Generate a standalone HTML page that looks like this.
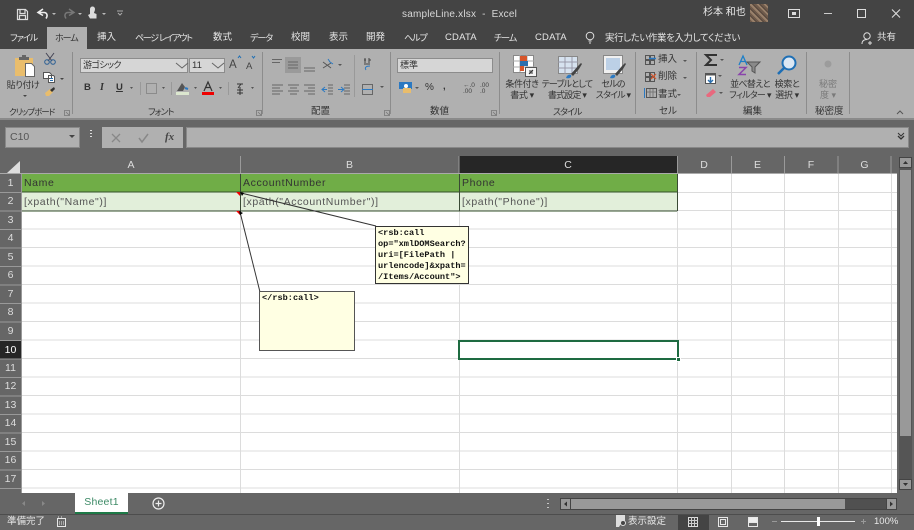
<!DOCTYPE html>
<html><head><meta charset="utf-8"><style>
html,body{margin:0;padding:0;background:#666}
#p{position:relative;width:914px;height:530px;overflow:hidden;background:#666;font-family:"Liberation Sans","Noto Sans CJK JP",sans-serif;font-size:10px;color:#333;font-feature-settings:"palt"}
#p div{position:absolute;white-space:nowrap}
.w{color:#e8e8e8}
.k{color:#333;font-size:9.5px;line-height:12px}
.c{text-align:center}
.sep{width:1px;background:#8c8c8c;top:52px;height:62px}
.tab{top:30px;font-size:9.5px;line-height:16px;color:#e6e6e6}
.kn{font-size:9px;letter-spacing:-1px}
.n{letter-spacing:-.4px}
.h{color:#ddd;font-size:10.5px;text-align:center;line-height:18px}
.r{left:0;width:21px;color:#ddd;font-size:10.5px;text-align:center;height:18px;line-height:18px;background:#666}
.cell{font-size:10.5px;line-height:18px;color:#555;letter-spacing:.6px}
svg{position:absolute;overflow:visible}
.note{font-family:"Liberation Mono","Noto Sans CJK JP",monospace;font-weight:bold;font-size:8.6px;line-height:11.1px;color:#111;background:#ffffe3}
</style></head><body><div id="p">
<!-- title -->
<div style="left:0;top:0;width:914px;height:27px;background:#444"></div>
<div style="left:0;top:27px;width:914px;height:22px;background:#444"></div>
<div style="left:47px;top:27px;width:40px;height:22px;background:#b0b0b0"></div>
<svg style="left:0;top:0" width="914" height="49" fill="none" stroke="#ddd">
<path d="M17.500 9.500h8l2 2v8h-10zM20 9.500v4h5v-4M19.500 19.500v-4h6v4" stroke-width="1.200"/>
<path d="M43 9l-5 3.500 5 3M38 12.500h6c3 0 4 3 2 6" stroke="#eee" stroke-width="1.600"/>
<path d="M69 9l5 3.500-5 3M74 12.500h-6c-3 0-4 3-2 6" stroke="#777" stroke-width="1.500"/>
<path d="M90 9a2.500 2.500 0 0 1 5 0c0 2-1 3-1 4l2.500 1v4.500h-6.500l-2-3.500 2-1z" fill="#ddd" stroke="none"/>
<path d="M52 13h4l-2 2zM78 13h4l-2 2zM102 13h4l-2 2z" fill="#bbb" stroke="none"/>
<path d="M117 11h6M118 13l2 2 2-2" stroke="#aaa"/>
<rect x="788.500" y="9.500" width="11" height="8" stroke="#ddd"/><rect x="792" y="12" width="4" height="3" fill="#ddd" stroke="none"/>
<path d="M824 13.500h8" stroke="#ccc"/><rect x="857.500" y="9.500" width="8" height="8" stroke="#ddd"/>
<path d="M892 9.500l8 8M900 9.500l-8 8" stroke="#ddd" stroke-width="1.100"/>
<circle cx="590" cy="36" r="3.800" stroke="#ddd"/><path d="M588.500 41h3M589 43h2" stroke="#ddd"/>
<circle cx="867" cy="36" r="3.200" stroke="#ddd"/><path d="M862 44c0-3 2-4.500 5-4.500M870 41v4M868 43h4" stroke="#ddd"/>
</svg>
<div class="w" style="left:402px;top:8px;font-size:10px;line-height:13px;letter-spacing:.2px;color:#d8d8d8">sampleLine.xlsx&nbsp; -&nbsp; Excel</div>
<div class="w" style="left:703px;top:6px;font-size:10px;line-height:14px">杉本 和也</div>
<div style="left:750px;top:4px;width:18px;height:18px;background:repeating-linear-gradient(45deg,#6e5a4b 0 2px,#98806a 2px 4px,#54453b 4px 5px)"></div>
<div class="tab kn" style="left:10px">ファイル</div>
<div class="tab kn" style="left:55px;color:#333">ホーム</div>
<div class="tab" style="left:97px">挿入</div>
<div class="tab kn" style="left:135px;letter-spacing:-1.300px">ページ レイアウト</div>
<div class="tab" style="left:213px">数式</div>
<div class="tab kn" style="left:250px">データ</div>
<div class="tab" style="left:291px">校閲</div>
<div class="tab" style="left:329px">表示</div>
<div class="tab" style="left:366px">開発</div>
<div class="tab kn" style="left:404px">ヘルプ</div>
<div class="tab" style="left:445px;letter-spacing:.2px">CDATA</div>
<div class="tab kn" style="left:494px">チーム</div>
<div class="tab" style="left:535px;letter-spacing:.2px">CDATA</div>
<div class="tab" style="left:605px;font-size:9.4px;letter-spacing:-.3px">実行したい作業を入力してください</div>
<div class="tab" style="left:877px">共有</div>
<!-- ribbon -->
<div style="left:0;top:49px;width:914px;height:69px;background:#b0b0b0"></div>
<div style="left:0;top:118px;width:914px;height:2px;background:#8a8a8a"></div>
<div class="sep" style="left:72px"></div><div class="sep" style="left:262px"></div><div class="sep" style="left:390px"></div><div class="sep" style="left:499px"></div><div class="sep" style="left:635px"></div><div class="sep" style="left:696px"></div><div class="sep" style="left:806px"></div><div class="sep" style="left:849px"></div>
<div style="left:354px;top:55px;width:1px;height:42px;background:#999"></div>
<div style="left:140px;top:82px;width:1px;height:13px;background:#999"></div>
<div style="left:171px;top:82px;width:1px;height:13px;background:#999"></div>
<div style="left:228px;top:82px;width:1px;height:13px;background:#999"></div>
<svg style="left:0;top:49px" width="914" height="69" fill="none">
<!-- clipboard -->
<path d="M15 9h18v18H15z" fill="#e9bd6c"/><path d="M19 8h10v3H19z" fill="#666"/><path d="M22 6h4v3h-4z" fill="#666"/>
<path d="M25.500 14.500h6l3 3v10h-9z" fill="#fff" stroke="#666"/>
<path d="M46 4l6 8M54 4l-6 8" stroke="#445"/><circle cx="47" cy="13" r="2.300" stroke="#2b5f94"/><circle cx="53" cy="13" r="2.300" stroke="#2b5f94"/>
<path d="M43.500 23.500h6l2 2v4h-8zM48.500 26.500h5l1 1v6h-6z" fill="#fff" stroke="#555"/><path d="M50 29.500h3M50 31.500h3" stroke="#2b6fae"/>
<path d="M45 44l5-4 3 3-4 4-3 0z" fill="#e9bd6c"/><path d="M50 41l4-3 1 2-3 3z" fill="#333"/>
<path d="M60 29h4l-2 2zM23 46h4l-2 2z" fill="#444"/>
<!-- align group -->
<rect x="285" y="8" width="16" height="16" fill="#9a9a9a"/>
<path d="M272 10.500h10M272 13.500h8M288 13h10M288 16h10M288 19h10M304 19h11M304 22h11" stroke="#666"/>
<path d="M272 36h11M272 39h8M272 42h11M272 45h8M288 36h11M290 39h7M288 42h11M290 45h7M304 36h11M308 39h7M304 42h11M308 45h7" stroke="#666"/>
<path d="M328 36h5M328 39h5M328 42h5M328 45h5" stroke="#666"/><path d="M322 40.500h5M325 38l-3 2.500 3 2.500" stroke="#2b79c2"/>
<path d="M344 36h6M344 39h6M344 42h6M344 45h6" stroke="#666"/><path d="M338 40.500h5M341 38l3 2.500-3 2.500" stroke="#2b79c2"/>
<path d="M323 13l8 6M323 19l8-5" stroke="#555"/><path d="M328 10l2 3 3 2" stroke="#2b79c2"/>
<path d="M338 15h4l-2 2zM380 37h4l-2 2z" fill="#555"/>
<path d="M364 11h2M369 11h2M364 15h6" stroke="#444"/><path d="M365 9v5M369 9v5" stroke="#444"/><path d="M370 17c-3 0-6 1-4 4" stroke="#2b79c2"/>
<rect x="362.500" y="35.500" width="10" height="10" stroke="#666"/><path d="M362 40.500h11" stroke="#2b79c2"/>
<!-- font group -->
<path d="M130 38h3l-1.500 2zM162 38h3l-1.500 2zM194 38h3l-1.500 2zM219 38h3l-1.500 2zM251 38h3l-1.500 2z" fill="#555"/>
<rect x="146.500" y="34.500" width="10" height="10" stroke="#666" stroke-dasharray="1 1"/>
<path d="M177 42l5-8 3 4-2 4z" fill="#555"/><path d="M185 39l3 1" stroke="#2b79c2" stroke-width="2"/><rect x="176" y="43" width="13" height="3" fill="#dce7cf"/>
<rect x="202" y="43" width="12" height="3" fill="#e00"/>
<path d="M204 42l4-9 4 9M205.500 38.500h5" stroke="#333" stroke-width="1.200"/>
<path d="M237 35h6M241 35l-3 4M237 41h6M237 44h6M240 38v8" stroke="#333"/>
<path d="M238 9l1.500-2 1.500 2" stroke="#1e6fb5"/><path d="M252 7l1.500 2 1.500-2" stroke="#1e6fb5"/>
<!-- expanders -->
<path d="M64.500 61.500h5v5h-5zM66 63l3 3M256.500 61.500h5v5h-5zM258 63l3 3M384.500 61.500h5v5h-5zM386 63l3 3M491.500 61.500h5v5h-5zM493 63l3 3" stroke="#777" stroke-width=".8"/>
<!-- number -->
<rect x="399" y="33" width="13" height="7" fill="#2b79c2"/><path d="M403 39h8v5h-8z" fill="#e9bd6c"/><circle cx="406" cy="37" r="2" fill="#fff"/>
<path d="M415 38h4l-2 2z" fill="#555"/>
<!-- styles -->
<rect x="513.500" y="6.500" width="20" height="17" fill="#fff" stroke="#888"/><path d="M520 6v17M527 6v17M513 12h21M513 18h21" stroke="#aaa"/><rect x="520" y="7" width="7" height="5" fill="#d7552a"/><rect x="520" y="12" width="8" height="5" fill="#2b6fae"/><rect x="520" y="17" width="4" height="5" fill="#d7552a"/><rect x="525.500" y="18.500" width="11" height="9" fill="#f4f4f4" stroke="#555"/><path d="M529 25l4-4M529 22h4M529 24h4" stroke="#333"/>
<rect x="558.500" y="7.500" width="19" height="17" fill="#d6e2ef" stroke="#888"/><path d="M558 13h20M565 8v17M572 8v17M558 19h20" stroke="#99a"/><path d="M571 25l7-8 3-3 1 1-3 5-6 7z" fill="#444"/><path d="M566 29c1-3 3-4 5-3 1 2-1 4-5 3z" fill="#2b79c2"/>
<rect x="603.500" y="6.500" width="19" height="18" fill="#f0f0f0" stroke="#888"/><rect x="606" y="9" width="14" height="12" fill="#bcd0e6"/><path d="M615 25l7-8 3-3 1 1-3 5-6 7z" fill="#444"/><path d="M610 29c1-3 3-4 5-3 1 2-1 4-5 3z" fill="#2b79c2"/>
<!-- cells -->
<g stroke="#555"><rect x="645.500" y="6.500" width="4" height="4"/><rect x="650.500" y="6.500" width="4" height="4"/><rect x="645.500" y="11.500" width="4" height="4"/><rect x="650.500" y="11.500" width="4" height="4"/>
<rect x="645.500" y="23.500" width="4" height="4"/><rect x="650.500" y="23.500" width="4" height="4"/><rect x="645.500" y="28.500" width="4" height="4"/><rect x="650.500" y="28.500" width="4" height="4"/>
<rect x="646.500" y="39.500" width="10" height="9"/><path d="M647 43h9M650 40v8M653 40v8" stroke="#777"/></g>
<path d="M649 9.500h7" stroke="#2b79c2" stroke-width="1.500"/><path d="M651 25l5 5M656 25l-5 5" stroke="#d7552a" stroke-width="1.200"/><path d="M644.500 39v10" stroke="#2b79c2"/>
<path d="M683 11h4l-2 2zM683 28h4l-2 2zM677 45h4l-2 2zM720 10h4l-2 2zM718 26h4l-2 2zM719 43h4l-2 2z" fill="#555"/>
<!-- edit -->
<path d="M717 6h-11l5 5-5 5h11" stroke="#333" stroke-width="2"/>
<rect x="705.500" y="24.500" width="10" height="10" fill="#fff" stroke="#555"/><path d="M705 25.500h11" stroke="#555" stroke-width="2"/><path d="M710.500 28v5M708 31l2.500 2.500 2.500-2.500" stroke="#2b6fae" stroke-width="1.400"/>
<path d="M706 46l7-6 3 3-6 5-3 0z" fill="#e8697e"/>
<path d="M739 16l4-9 4 9M741 12.500h4" stroke="#1e7fc7" stroke-width="1.300"/><path d="M739 18.500h7l-7 7h7" stroke="#8a44ab" stroke-width="1.500"/>
<path d="M747 13h13l-5 5v6l-3-2v-4z" fill="#8a8a8a" stroke="#555"/>
<circle cx="789" cy="14" r="6.500" fill="#dbe7f3" stroke="#1e6fb5" stroke-width="2"/><path d="M784 19l-6 6" stroke="#1e6fb5" stroke-width="2.600"/>
<circle cx="828" cy="15" r="3.500" fill="#9c9c9c"/>
<path d="M897 65l3-3 3 3" stroke="#555"/>
</svg>
<div class="k c n" style="left:5px;top:79px;width:36px;font-size:9px">貼り付け</div>
<div class="k" style="left:9px;top:106px;font-size:8.5px;letter-spacing:-1px">クリップボード</div>
<div style="left:80px;top:58px;width:108px;height:15px;background:#d6d6d6;border:1px solid #8c8c8c;box-sizing:border-box;font-size:9px;line-height:13px;padding-left:2px;letter-spacing:-.6px">游ゴシック</div>
<div style="left:189px;top:58px;width:36px;height:15px;background:#d6d6d6;border:1px solid #8c8c8c;box-sizing:border-box;font-size:9.5px;line-height:13px;padding-left:2px">11</div>
<svg style="left:0;top:0" width="520" height="80" fill="none"><path d="M176 63l6 5 6-5M212 63l6 5 6-5M481 63l5 4 5-4" stroke="#666"/></svg>
<div style="left:229px;top:58px;font-size:11.5px;line-height:14px;color:#444">A</div>
<div style="left:246px;top:60px;font-size:9.5px;line-height:13px;color:#444">A</div>
<div style="left:84px;top:82px;font-weight:bold;font-size:9.5px;line-height:12px">B</div>
<div style="left:100px;top:82px;font-style:italic;font-family:'Liberation Serif',serif;font-weight:bold;font-size:10px;line-height:12px">I</div>
<div style="left:116px;top:82px;font-weight:bold;font-size:9.5px;line-height:12px;text-decoration:underline">U</div>
<div class="k" style="left:148px;top:106px;font-size:9px;letter-spacing:-1px">フォント</div>
<div class="k" style="left:311px;top:106px">配置</div>
<div style="left:397px;top:58px;width:96px;height:15px;background:#d6d6d6;border:1px solid #8c8c8c;box-sizing:border-box;font-size:9px;line-height:13px;padding-left:2px">標準</div>
<div class="k" style="left:425px;top:82px;font-size:10px">%</div>
<div class="k" style="left:443px;top:81px;font-weight:bold">,</div>
<div style="left:463px;top:83px;font-size:6.5px;line-height:5.500px;color:#444">←.0<br>.00</div>
<div style="left:480px;top:83px;font-size:6.5px;line-height:5.500px;color:#444">.00<br>.0</div>
<div class="k" style="left:430px;top:106px">数値</div>
<div class="k c n" style="left:505px;top:79px;width:34px;line-height:11px;font-size:9px">条件付き<br>書式 ▾</div>
<div class="k c" style="left:541px;top:79px;width:52px;line-height:11px;font-size:9px;letter-spacing:-.8px">テーブルとして<br>書式設定 ▾</div>
<div class="k c" style="left:594px;top:79px;width:38px;line-height:11px;font-size:9px;letter-spacing:-.8px">セルの<br>スタイル ▾</div>
<div class="k" style="left:553px;top:106px;font-size:9px;letter-spacing:-1px">スタイル</div>
<div class="k" style="left:658px;top:54px">挿入</div><div class="k" style="left:658px;top:71px">削除</div><div class="k" style="left:658px;top:89px">書式</div>
<div class="k" style="left:659px;top:106px">セル</div>
<div class="k c" style="left:728px;top:79px;width:44px;line-height:11px;font-size:9px;letter-spacing:-.7px">並べ替えと<br>フィルター ▾</div>
<div class="k c n" style="left:772px;top:79px;width:30px;line-height:11px;font-size:9px">検索と<br>選択 ▾</div>
<div class="k" style="left:743px;top:106px">編集</div>
<div class="k c" style="left:810px;top:79px;width:36px;line-height:11px;font-size:9px;color:#7a7a7a">秘密<br>度 ▾</div>
<div class="k" style="left:815px;top:106px">秘密度</div>
<!-- formula bar -->
<div style="left:5px;top:127px;width:75px;height:21px;background:#b0b0b0;border:1px solid #888;box-sizing:border-box;font-size:10.5px;line-height:19px;padding-left:4px;color:#555">C10</div>
<div style="left:102px;top:127px;width:81px;height:21px;background:#b0b0b0"></div>
<div style="left:186px;top:127px;width:723px;height:21px;background:#b0b0b0;border:1px solid #888;box-sizing:border-box"></div>
<svg style="left:0;top:120px" width="914" height="36" fill="none">
<path d="M69 15h6l-3 3z" fill="#444"/>
<path d="M91 10v1M91 13v1M91 16v1" stroke="#ddd" stroke-width="2"/>
<path d="M112 14l8 8M120 14l-8 8" stroke="#888" stroke-width="1.300"/><path d="M139 18l3 4 6-8" stroke="#888" stroke-width="1.500"/>
<path d="M898 16l3 3 3-3" stroke="#333" stroke-width="1.300"/><path d="M898 13l3 3 3-3" stroke="#333"/>
</svg>
<div style="left:165px;top:130px;font-family:'Liberation Serif',serif;font-style:italic;font-weight:bold;font-size:11px;line-height:14px;color:#444">fx</div>
<!-- headers -->
<div style="left:22px;top:156px;width:875px;height:18px;background:#666"></div>
<div style="left:459px;top:156px;width:218px;height:18px;background:#262626;border-bottom:1px solid #1e6b41;box-sizing:border-box"></div>
<div class="h" style="left:22px;top:156px;width:218px">A</div>
<div class="h" style="left:240px;top:156px;width:219px">B</div>
<div class="h" style="left:459px;top:156px;width:218px">C</div>
<div class="h" style="left:677px;top:156px;width:54px">D</div>
<div class="h" style="left:731px;top:156px;width:53px">E</div>
<div class="h" style="left:784px;top:156px;width:54px">F</div>
<div class="h" style="left:838px;top:156px;width:53px">G</div>
<svg style="left:0;top:156px" width="914" height="18"><path d="M240.500 0v18M459 0v18M677.500 0v18M731.500 0v18M784.500 0v18M838 0v18M891 0v18" stroke="#9a9a9a"/><path d="M7 17l13-12v12z" fill="#ddd"/><path d="M0 17.500h897" stroke="#aaa"/></svg>
<!-- sheet -->
<div style="left:22px;top:174px;width:875px;height:319px;background:#fff"></div>
<div style="left:22px;top:174px;width:655px;height:18px;background:#70ad47"></div>
<div style="left:22px;top:192px;width:655px;height:19px;background:#e2efda"></div>
<svg style="left:0;top:174px" width="897" height="319" shape-rendering="crispEdges">
<path d="M22 36.500h875M22 55h875M22 73.500h875M22 92h875M22 110.500h875M22 129h875M22 147.500h875M22 166h875M22 184.500h875M22 203h875M22 221.500h875M22 240h875M22 258.500h875M22 277h875M22 295.500h875M22 314h875M677 18.500h220" stroke="#dcdcdc"/>
<path d="M240.500 37v282M459.500 37v282M677.500 0v319M731.500 0v319M784.500 0v319M838.500 0v319M891.500 0v319" stroke="#dcdcdc"/>
<path d="M22 18h655M22 37h655" stroke="#33502a"/><path d="M240.500 0v37M459.500 0v37M677.500 0v37" stroke="#3a4a35"/>
<path d="M240.500 37v3" stroke="#222"/>
</svg>
<!-- row headers -->
<div class="r" style="top:174px">1</div><div class="r" style="top:192px">2</div><div class="r" style="top:211px">3</div><div class="r" style="top:229px">4</div><div class="r" style="top:248px">5</div><div class="r" style="top:266px">6</div><div class="r" style="top:285px">7</div><div class="r" style="top:303px">8</div><div class="r" style="top:322px">9</div>
<div class="r" style="top:341px;background:#262626;color:#fff">10</div>
<div class="r" style="top:359px">11</div><div class="r" style="top:377px">12</div><div class="r" style="top:396px">13</div><div class="r" style="top:414px">14</div><div class="r" style="top:433px">15</div><div class="r" style="top:451px">16</div><div class="r" style="top:470px">17</div>
<svg style="left:0;top:174px" width="22" height="319"><path d="M0 18.500h22M0 37h22M0 55.500h22M0 74h22M0 92.500h22M0 111h22M0 129.500h22M0 148h22M0 166.500h22M0 185h22M0 203.500h22M0 222h22M0 240.500h22M0 259h22M0 277.500h22M0 296h22M0 314.500h22M21.500 0v319" stroke="#999"/></svg>
<!-- cells -->
<div class="cell" style="left:24px;top:174px;color:#333">Name</div>
<div class="cell" style="left:243px;top:174px;color:#333">AccountNumber</div>
<div class="cell" style="left:462px;top:174px;color:#333">Phone</div>
<div class="cell" style="left:24px;top:193px">[xpath("Name")]</div>
<div class="cell" style="left:243px;top:193px">[xpath("AccountNumber")]</div>
<div class="cell" style="left:462px;top:193px">[xpath("Phone")]</div>
<!-- selection -->
<div style="left:458px;top:340px;width:221px;height:20px;border:2px solid #1e6b41;box-sizing:border-box"></div>
<div style="left:676px;top:357px;width:5px;height:5px;background:#1e6b41;border:1px solid #fff;box-sizing:border-box"></div>
<!-- notes -->
<svg style="left:0;top:0" width="914" height="530" fill="none">
<path d="M236 192h4v4zM236 211h4v4z" fill="#e00"/>
<path d="M241 193L376 226" stroke="#333"/><path d="M240 212L260 292" stroke="#333"/>
<path d="M240 192l4 1-2 3zM239 211l4 2-3 2z" fill="#000"/>
</svg>
<div class="note" style="left:375px;top:226px;width:94px;height:58px;border:1px solid #333;box-sizing:border-box;padding:1px 2px">&lt;rsb:call<br>op="xmlDOMSearch?<br>uri=[FilePath |<br>urlencode]&amp;xpath=<br>/Items/Account"&gt;</div>
<div class="note" style="left:259px;top:291px;width:96px;height:60px;border:1px solid #555;box-sizing:border-box;padding:1px 2px">&lt;/rsb:call&gt;</div>
<!-- vertical scrollbar -->
<div style="left:899px;top:157px;width:13px;height:333px;background:#555"></div>
<div style="left:899px;top:157px;width:13px;height:11px;background:#999;border:1px solid #444;box-sizing:border-box"></div>
<div style="left:900px;top:170px;width:11px;height:266px;background:#999"></div>
<div style="left:899px;top:479px;width:13px;height:11px;background:#999;border:1px solid #444;box-sizing:border-box"></div>
<svg style="left:899px;top:157px" width="13" height="333"><path d="M4 7l2.500-3 2.500 3zM4 326l2.500 3 2.500-3z" fill="#333"/></svg>
<!-- bottom bar -->
<div style="left:0;top:493px;width:914px;height:21px;background:#666"></div>
<div style="left:75px;top:493px;width:53px;height:21px;background:#fff;border-bottom:2px solid #1e7a47;box-sizing:border-box;font-size:10.5px;line-height:19px;text-align:center;color:#3d8a66;letter-spacing:.2px">Sheet1</div>
<svg style="left:0;top:493px" width="914" height="21" fill="none"><path d="M25 8l-3 2.500 3 2.500zM42 8l3 2.500-3 2.500z" fill="#888"/><circle cx="158.500" cy="10.500" r="5.500" stroke="#eee" stroke-width="1.200"/><path d="M155.500 10.500h6M158.500 7.500v6" stroke="#eee" stroke-width="1.200"/><path d="M548 6v1M548 10v1M548 14v1" stroke="#ddd" stroke-width="1.600"/></svg>
<div style="left:560px;top:498px;width:337px;height:12px;background:#505050;border:1px solid #444;box-sizing:border-box"></div>
<div style="left:560px;top:498px;width:11px;height:12px;background:#999;border:1px solid #444;box-sizing:border-box"></div>
<div style="left:571px;top:499px;width:274px;height:10px;background:#999"></div>
<div style="left:886px;top:498px;width:11px;height:12px;background:#999;border:1px solid #444;box-sizing:border-box"></div>
<svg style="left:560px;top:498px" width="337" height="12"><path d="M7 3.500l-3 2.500 3 2.500zM330 3.500l3 2.500-3 2.500z" fill="#333"/></svg>
<!-- status -->
<div style="left:0;top:514px;width:914px;height:16px;background:#666;border-top:1px solid #4d4d4d;box-sizing:border-box"></div>
<div style="left:7px;top:515px;font-size:9.5px;line-height:14px;color:#e8e8e8">準備完了</div>
<div style="left:628px;top:515px;font-size:9.5px;line-height:14px;color:#e8e8e8">表示設定</div>
<div style="left:678px;top:515px;width:31px;height:15px;background:#444"></div>
<div style="left:874px;top:515px;font-size:9.5px;line-height:14px;color:#e8e8e8">100%</div>
<svg style="left:0;top:514px" width="914" height="16" fill="none" stroke="#e8e8e8">
<rect x="57.500" y="4.500" width="8" height="8"/><path d="M58 3h1M61 3h1M59 8h5M59 10h5" stroke-dasharray="1 1"/>
<path d="M616 1h9v7h-3l-3 5h-3z" fill="#ddd" stroke="none"/><circle cx="623" cy="9" r="2.500" fill="#444" stroke="#ddd"/>
<rect x="688.500" y="3.500" width="9" height="9" stroke="#ddd"/><path d="M688 6.500h10M688 9.500h10M691.500 3v9M694.500 3v9" stroke="#ccc"/>
<rect x="718.500" y="3.500" width="9" height="9"/><rect x="720.500" y="5.500" width="5" height="5"/>
<rect x="748.500" y="3.500" width="9" height="9"/><path d="M749 3.500h8v5h-8z" fill="#eee"/>
<path d="M781 7.500h74" stroke="#e8e8e8"/><path d="M772 7.500h5M861 7.500h5M863.500 5v5" stroke="#999"/>
<rect x="817" y="3" width="3" height="9" fill="#fff" stroke="none"/>
</svg>
</div></body></html>
